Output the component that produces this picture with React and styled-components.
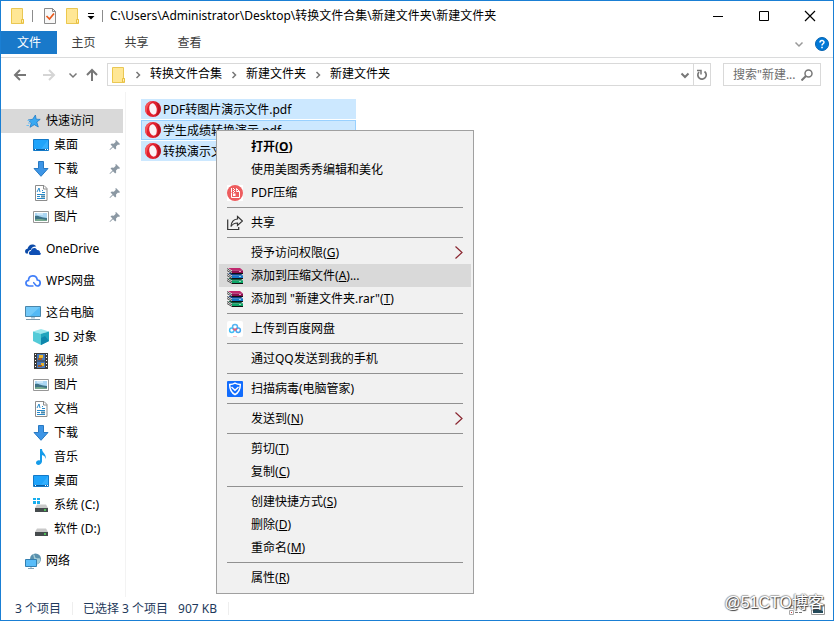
import React from 'react';
import styled, { createGlobalStyle, css } from 'styled-components';

const GlobalStyle = createGlobalStyle`
  *, *::before, *::after {
    box-sizing: border-box;
  }

  body {
    margin: 0;
    background: #fff;
  }

  body, button, input {
    font-family: 'Noto Sans', 'Noto Sans CJK SC', sans-serif;
    font-size: 12px;
    color: #000;
  }

  button {
    border: none;
    padding: 0;
    margin: 0;
    background: transparent;
    text-align: left;
    white-space: nowrap;
  }

  svg {
    display: block;
    flex: none;
  }
`;

const Window = styled.div`
  position: relative;
  display: flex;
  flex-direction: column;
  min-height: 100vh;
  border: 1px solid #1a7fd4;
  background: #fff;
`;

const TitleBar = styled.header`
  display: flex;
  align-items: center;
  height: 30px;
`;

const QuickTools = styled.div`
  display: flex;
  align-items: center;
  padding-left: 8px;
`;

const ToolButton = styled.button`
  display: flex;
  align-items: center;
  justify-content: center;
  width: ${({ $width }) => $width || 16}px;
  height: 22px;
`;

const ToolDivider = styled.span`
  width: 1px;
  height: 12px;
  margin: 0 ${({ $after }) => $after || 7}px 0 7px;
  background: #8c8c8c;
`;

const Title = styled.h1`
  flex: 1;
  min-width: 0;
  margin: 0;
  overflow: hidden;
  font-size: 12px;
  font-weight: 400;
  line-height: 20px;
  white-space: nowrap;
`;

const CaptionButton = styled.button`
  display: flex;
  align-items: center;
  justify-content: center;
  width: 46px;
  height: 30px;
`;

const Ribbon = styled.nav`
  display: flex;
  align-items: flex-start;
  height: 27px;
  border-bottom: 1px solid #dadbdc;
`;

const Tab = styled.button`
  width: ${({ $primary }) => ($primary ? 56 : 53)}px;
  height: 23px;
  padding-top: 1px;
  line-height: 22px;
  text-align: center;
  color: ${({ $primary }) => ($primary ? '#fff' : '#3c3c3c')};
  background: ${({ $primary }) => ($primary ? '#1979ca' : 'transparent')};
`;

const RibbonTools = styled.div`
  display: flex;
  align-items: center;
  gap: 8px;
  height: 26px;
  margin-left: auto;
  padding-right: 4px;
`;

const NavRow = styled.div`
  display: flex;
  align-items: center;
  padding: 5px 12px 6px 0;
`;

const NavButtons = styled.div`
  display: flex;
  align-items: center;
  width: 106px;
  padding-left: 11px;
`;

const AddressBar = styled.div`
  display: flex;
  align-items: center;
  flex: 1;
  min-width: 0;
  height: 23px;
  border: 1px solid #d9d9d9;
`;

const Crumbs = styled.ol`
  display: flex;
  align-items: center;
  flex: 1;
  min-width: 0;
  margin: 0;
  padding: 0 0 0 2px;
  list-style: none;
`;

const Crumb = styled.li`
  display: flex;
  align-items: center;
  height: 21px;
`;

const CrumbButton = styled.button`
  height: 21px;
  line-height: 20px;
  padding-bottom: 1px;
`;

const CrumbArrow = styled.span`
  display: flex;
  justify-content: center;
  width: 24px;
`;

const RefreshButton = styled(ToolButton)`
  width: 17px;
  height: 21px;
  border-left: 1px solid #d9d9d9;
`;

const SearchBox = styled.label`
  display: flex;
  align-items: center;
  width: 98px;
  height: 23px;
  margin-left: 12px;
  padding: 0 7px 0 9px;
  border: 1px solid #d9d9d9;
`;

const SearchInput = styled.input`
  flex: 1;
  min-width: 0;
  height: 20px;
  padding: 0;
  border: none;
  outline: none;
  background: transparent;

  &::placeholder {
    color: #6d6d6d;
    opacity: 1;
  }
`;

const Main = styled.main`
  display: flex;
  flex: 1;
`;

const Sidebar = styled.nav`
  display: flex;
  flex-direction: column;
  gap: 8px;
  width: 125px;
  padding: 17px 2px 0 0;
  border-right: 1px solid #f3f3f3;
`;

const Group = styled.div`
  display: flex;
  flex-direction: column;
`;

const SideItem = styled.button`
  display: flex;
  align-items: center;
  gap: 5px;
  height: 24px;
  padding: 0 2px 0 ${({ $child }) => ($child ? 32 : 24)}px;
  line-height: 22px;
  background: ${({ $active }) => ($active ? '#d9d9d9' : 'transparent')};
`;

const PinSlot = styled.span`
  margin-left: auto;
`;

const Files = styled.section`
  display: flex;
  flex-direction: column;
  align-items: flex-start;
  gap: 1px;
  flex: 1;
  padding: 7px 15px;
`;

const FileRow = styled.button`
  display: flex;
  align-items: center;
  gap: 2px;
  width: 215px;
  height: 20px;
  padding: 0 3px;
  line-height: 18px;
  border: 1px solid ${({ $focused }) => ($focused ? '#99d1ff' : '#cce8ff')};
  background: #cce8ff;
`;

const FileName = styled.span`
  padding-top: 2px;
`;

const StatusBar = styled.footer`
  display: flex;
  align-items: center;
  height: 23px;
  padding-left: 14px;
  line-height: 20px;
  color: #1e395b;
`;

const StatusDivider = styled.span`
  width: 1px;
  height: 13px;
  margin: 0 10px 0 11px;
  background: #eee;
`;

const StatusSize = styled.span`
  margin-left: 10px;
`;

const ViewButtons = styled.div`
  display: flex;
  gap: 8px;
  margin-left: auto;
  padding-right: 8px;
`;

const Watermark = styled.div`
  position: absolute;
  right: 9px;
  bottom: 5px;
  font-family: 'Liberation Sans', 'Noto Sans CJK SC', sans-serif;
  font-size: 16px;
  line-height: 24px;
  color: #fff;
  text-shadow: 1px 1px 1px #333, -1px 0 1px #999, 0 -1px 1px #aaa;
  pointer-events: none;
`;

const Menu = styled.div`
  position: absolute;
  top: 129px;
  left: 215px;
  width: 258px;
  padding: 4px 2px;
  border: 1px solid #a0a0a0;
  background: #f1f1f1;
`;

const MenuItem = styled.button`
  display: flex;
  align-items: center;
  width: 100%;
  height: 23px;
  padding: 0 8px;
  line-height: 22px;

  ${({ $hover }) => $hover && css`
    background: #d9d9d9;
  `}

  ${({ $bold }) => $bold && css`
    font-weight: 700;
  `}
`;

const MenuIcon = styled.span`
  width: 24px;
`;

const MenuArrow = styled.span`
  margin-left: auto;
`;

const MenuDivider = styled.hr`
  height: 1px;
  margin: 3px 8px;
  border: none;
  background: #919191;
`;

const Svg = ({ size = 16, children, ...rest }) => (
  <svg width={size} height={size} viewBox={`0 0 ${size} ${size}`} fill="none" aria-hidden="true" {...rest}>
    {children}
  </svg>
);

const FolderIcon = () => (
  <Svg>
    <path d="M2.5.5h11v11h1v4h-12z" fill="#ffe795" stroke="#e9c754" />
    <path d="M12.5 15v-3.5h2V15z" fill="#fff0b5" stroke="#e9c040" />
    <path d="M2.5 1v14.5" stroke="#edc84b" />
  </Svg>
);

const CheckDocIcon = () => (
  <Svg>
    <path d="M2.5.5h8l3 3v12h-11z" fill="#f8f8f8" stroke="#8a8a8a" />
    <path d="M10.5.5v3h3" stroke="#8a8a8a" />
    <path d="M4.5 8l3 3L12 5.5" stroke="#e8591c" strokeWidth="1.7" />
  </Svg>
);

const Chevron = ({ dir = 'down', color = '#777', width = 2 }) => {
  const paths = { down: 'M1.5 3.5L5 7l3.5-3.5', right: 'M3.5 2L6.5 5l-3 3' };
  return (
    <Svg size={10}>
      <path d={paths[dir]} stroke={color} strokeWidth={width} />
    </Svg>
  );
};

const ArrowIcon = ({ dir, color = '#777' }) => {
  const paths = {
    back: 'M14 8H3M8 3L3 8l5 5',
    forward: 'M2 8h11M8 3l5 5-5 5',
    up: 'M8 14V3M3 8l5-5 5 5',
  };
  return (
    <Svg>
      <path d={paths[dir]} stroke={color} strokeWidth="2" />
    </Svg>
  );
};

const StarIcon = () => (
  <Svg>
    <path d="M10.4 2l.8 4.200 4 .2-3.400 2.600 1.500 5-4-2.300-4.300 2.600 1.200-4.300L3 7l4.600-.7z" fill="#3aa9f2" stroke="#1876c4" strokeWidth=".7" />
    <path d="M2.500 7.500H5M3 10h2.500M1.500 12.500H4" stroke="#6fbdf0" />
  </Svg>
);

const DesktopIcon = () => (
  <Svg>
    <path d="M.5 2.500h15v11H.5z" fill="#1fa4fb" stroke="#1379c7" />
    <path d="M15 3v8L8 12z" fill="#4cbaff" opacity=".5" />
    <path d="M1 12.500h14" stroke="#0b5c9f" />
    <path d="M2 12.500h1M12 12.500h1M14 12.500h1" stroke="#fff" />
  </Svg>
);

const DownloadIcon = () => (
  <Svg>
    <path d="M5.500.5h5v7h4.500L8 15.300 1 7.500h4.500z" fill="#3d95e6" stroke="#2879c2" />
  </Svg>
);

const DocumentIcon = () => (
  <Svg>
    <path d="M2.500.5h8.500l3 3v12H2.500z" fill="#fff" stroke="#8c8c8c" />
    <path d="M10.500.5v3.500H14" stroke="#8c8c8c" />
    <path d="M4 7l2-4 1 4M9 5.500h1M9 7.500h3M4 9.500h8M4 11.500h3M4 13.500h8" stroke="#2889c9" />
    <path d="M8 10.500h4v2H8z" fill="#4b87a8" />
  </Svg>
);

const PictureIcon = () => (
  <Svg>
    <path d="M.5 2.500h15v11H.5z" fill="#fff" stroke="#979797" />
    <path d="M2 4h12v8H2z" fill="#aad6f3" />
    <path d="M2 7c3-1 6 2 12 2v3H2z" fill="#3d7286" />
    <path d="M2 10.500c5-1 8 0 12 .5v1H2z" fill="#77a98f" />
    <path d="M4 5h6" stroke="#eef8ff" />
  </Svg>
);

const PinIcon = () => (
  <Svg size={12}>
    <path d="M7 1l4 4-1 1-1-.5-2 2 .2 2L6.200 10.500 4 8.200 1 11l-.5-.5L3.500 7.500 1.500 5.500 2.800 4.500l2 .2 2-2-.5-1z" fill="#8b98a3" />
  </Svg>
);

const OneDriveIcon = () => (
  <Svg>
    <path d="M1 12.500C-1 10.500.5 7.800 2.500 7.800 3 5 5.500 3 8 3.500c1.600.2 2.500 1 3.200 2-3.200-.3-5 1.600-5.400 3.500-2.200.2-3.100 1.800-2.800 3.500z" fill="#0b4aa8" />
    <path d="M5.500 14C3.300 14 3.200 10 6 10c.2-3.200 4.800-4.300 6-1 2.500-.3 3.200 1.600 2.800 2.600C16.500 12.200 16 14 14.500 14z" fill="#0f50b5" />
  </Svg>
);

const WpsCloudIcon = () => (
  <Svg>
    <path d="M8.500 13H4.200C.2 13-.2 8 3.500 7.500 3.500 1.500 11.500 1.300 12.300 7 16.300 7.200 16 13 12.200 13 10 13 9.800 9.500 8 9.500" stroke="#417ff9" strokeWidth="1.700" />
  </Svg>
);

const ComputerIcon = () => (
  <Svg>
    <path d="M.5 1.500h15v10H.5z" fill="#54b9f5" stroke="#4a86aa" />
    <path d="M1 2h14L5 11H1z" fill="#7fd0fb" opacity=".7" />
    <path d="M6 12h4v1.500H6z" fill="#a8c5d8" />
    <path d="M1 14.500h14" stroke="#7b98ab" />
  </Svg>
);

const CubeIcon = () => (
  <Svg>
    <path d="M0 2.500L8 0l8 2.500-8 2.300z" fill="#9be8ee" />
    <path d="M0 2.500l8 2.300V16l-8-4z" fill="#54cbd8" />
    <path d="M16 2.500L8 4.800V16l8-4z" fill="#20a5bd" />
    <path d="M8 9l4-2 4 5-8 4z" fill="#0e87ac" />
  </Svg>
);

const VideoIcon = () => (
  <Svg>
    <path d="M1 0h14v16H1z" fill="#3c3c3c" />
    <path d="M4 1h8v6.500H4zM4 8.500h8V15H4z" fill="#4778bc" />
    <path d="M6 2h4v3H6zM8 10h3v3H8z" fill="#e8b42c" />
    <path d="M5 5h4v2H5zM5 12h4v2H5z" fill="#9c5b28" />
    <path d="M2.500 1v14M13.500 1v14" stroke="#fff" strokeDasharray="1 2" />
  </Svg>
);

const MusicIcon = () => (
  <Svg>
    <path d="M7 0h2c0 4 5 5 3.500 10-.3-3-2-3.500-3.500-4v6.500C8.500 16.500 3 17 3 13.800c0-2.200 2.500-3 4-2.300z" fill="#159be9" />
  </Svg>
);

const DriveIcon = ({ system }) => (
  <Svg>
    <path d="M4 7.500h9l2 3.500H2z" fill="#c9c9c9" />
    <path d="M2 11h13v4H2z" fill="#454b4d" />
    <path d="M11 13h2" stroke="#52e35d" strokeWidth="1.500" />
    {system && <path d="M0 1h3v2H0zM4 1h3v2H4zM0 4h3v3H0zM4 4h3v3H4z" fill="#17aeee" />}
  </Svg>
);

const NetworkIcon = () => (
  <Svg>
    <circle cx="10.500" cy="6" r="5.500" fill="#5a91ad" />
    <path d="M8 1c3 1 1 3 3 4s4-1 4.500 2c-1 3-3 5-5 4z" fill="#a5cdd6" />
    <path d="M.5 6.500h11v7H.5z" fill="#59bdf9" stroke="#337fb0" />
    <path d="M3 15.500h6M6 14v1" stroke="#85a4b7" />
  </Svg>
);

const OperaIcon = () => (
  <Svg>
    <circle cx="8" cy="8" r="8" fill="#e3202f" />
    <path d="M8 0C3.300 0 0 3.500 0 8c0 2 .8 4 2 5.300C1 8 3 2.500 8 0z" fill="#f4545c" />
    <path d="M10 15.500c3.500-3 4-9 1-14.500 6.500 3 6.500 11.500-1 14.500z" fill="#b81523" />
    <ellipse cx="8" cy="8" rx="3.700" ry="5.700" transform="rotate(-12 8 8)" fill="#fbf3f6" />
  </Svg>
);

const PdfZipIcon = () => (
  <Svg>
    <path d="M0 0h16v16H0z" fill="#fff" />
    <circle cx="8" cy="8" r="8" fill="#ed5c5e" />
    <path d="M9.500 5.500V3.500l3 3h-3zM12.500 6.500v6h-8v-5" stroke="#fff" />
    <path d="M4.500 3v4M6.500 3v1M7.500 4v1M6.500 5v1M7.500 6v1M6.500 7v1" stroke="#fff" />
    <path d="M6 8.500h2.500v2.500H6z" fill="#fff" />
  </Svg>
);

const ShareIcon = () => (
  <Svg>
    <path d="M.7 4.500v10h11V12" stroke="#333" strokeWidth="1.200" />
    <path d="M10.500 1.500l5 4.500-5 4.500V8C7.500 8 5.500 9 4 11.500 4.300 7 6.500 4.300 10.500 4z" stroke="#333" strokeWidth="1.200" />
  </Svg>
);

// one book of the stack: cover on top, spine in front, pages on the left
const RarBook = ({ y, cover, spine, shine }) => (
  <g transform={`translate(0 ${y})`}>
    <path d="M0 0h2l4 3v3L0 2z" fill="#eee" />
    <path d="M0 .5l5 3.500M0 2.500l5 3" stroke="#222" strokeWidth=".8" />
    <path d="M1 0h12l3 2.500H5z" fill={cover} />
    <path d="M5 2.500h11V5H5z" fill={spine} />
    <path d="M12 3h2v1h-2z" fill={shine} />
    <path d="M5 5.500h11" stroke="#111" />
  </g>
);

const RarIcon = () => (
  <Svg>
    <RarBook y={10} cover="#0b5b3c" spine="#0da768" shine="#8de0b8" />
    <RarBook y={5} cover="#123f86" spine="#1478c8" shine="#8fd0f5" />
    <RarBook y={0} cover="#c0286e" spine="#8c1050" shine="#ef9cc4" />
  </Svg>
);

const BaiduIcon = () => (
  <Svg>
    <rect width="16" height="16" rx="2" fill="#fff" />
    <circle cx="8" cy="6" r="2.500" stroke="#55b4f2" strokeWidth="1.500" />
    <circle cx="4.800" cy="9.300" r="2.200" stroke="#42bdf5" strokeWidth="1.500" />
    <circle cx="11.200" cy="9.300" r="2.200" stroke="#4aa9f0" strokeWidth="1.500" />
    <path d="M6 7.500L8 9.200l2-2" stroke="#f15b77" strokeWidth="1.600" />
    <path d="M6 15.500h4" stroke="#fac4cd" />
  </Svg>
);

const ShieldIcon = () => (
  <Svg>
    <rect width="16" height="16" rx="1" fill="#126cfd" />
    <path d="M8 2.200c1.700 1 3.500 1.300 5.300 1.300 0 5-1.300 8-5.300 10.200C4 11.500 2.700 8.500 2.700 3.500 4.500 3.500 6.300 3.200 8 2.200z" stroke="#fff" strokeWidth="1.500" />
    <path d="M4.500 6L8 9.200 11.500 6" stroke="#fff" strokeWidth="1.500" />
  </Svg>
);

const SubmenuIcon = () => (
  <Svg>
    <path d="M8.500 1.500L15 7.500l-6.500 6" stroke="#8a2630" strokeWidth="1.200" />
  </Svg>
);

const sideGroups = [
  {
    label: '快速访问', icon: <StarIcon />, active: true,
    children: [
      { label: '桌面', icon: <DesktopIcon />, pinned: true },
      { label: '下载', icon: <DownloadIcon />, pinned: true },
      { label: '文档', icon: <DocumentIcon />, pinned: true },
      { label: '图片', icon: <PictureIcon />, pinned: true },
    ],
  },
  { label: 'OneDrive', icon: <OneDriveIcon />, children: [] },
  { label: 'WPS网盘', icon: <WpsCloudIcon />, children: [] },
  {
    label: '这台电脑', icon: <ComputerIcon />,
    children: [
      { label: '3D 对象', icon: <CubeIcon /> },
      { label: '视频', icon: <VideoIcon /> },
      { label: '图片', icon: <PictureIcon /> },
      { label: '文档', icon: <DocumentIcon /> },
      { label: '下载', icon: <DownloadIcon /> },
      { label: '音乐', icon: <MusicIcon /> },
      { label: '桌面', icon: <DesktopIcon /> },
      { label: '系统 (C:)', icon: <DriveIcon system /> },
      { label: '软件 (D:)', icon: <DriveIcon /> },
    ],
  },
  { label: '网络', icon: <NetworkIcon />, children: [] },
];

const files = ['PDF转图片演示文件.pdf', '学生成绩转换演示.pdf', '转换演示文件.pdf'];

const crumbs = ['转换文件合集', '新建文件夹', '新建文件夹'];

const menuSections = [
  [
    { label: '打开', hotkey: 'O', bold: true },
    { label: '使用美图秀秀编辑和美化' },
    { label: 'PDF压缩', icon: <PdfZipIcon /> },
  ],
  [{ label: '共享', icon: <ShareIcon /> }],
  [
    { label: '授予访问权限', hotkey: 'G', submenu: true },
    { label: '添加到压缩文件', hotkey: 'A', suffix: '...', icon: <RarIcon />, hover: true },
    { label: '添加到 "新建文件夹.rar"', hotkey: 'T', icon: <RarIcon /> },
  ],
  [{ label: '上传到百度网盘', icon: <BaiduIcon /> }],
  [{ label: '通过QQ发送到我的手机' }],
  [{ label: '扫描病毒(电脑管家)', icon: <ShieldIcon /> }],
  [{ label: '发送到', hotkey: 'N', submenu: true }],
  [
    { label: '剪切', hotkey: 'T' },
    { label: '复制', hotkey: 'C' },
  ],
  [
    { label: '创建快捷方式', hotkey: 'S' },
    { label: '删除', hotkey: 'D' },
    { label: '重命名', hotkey: 'M' },
  ],
  [{ label: '属性', hotkey: 'R' }],
];

const ContextMenu = () => (
  <Menu role="menu">
    {menuSections.map((items, index) => (
      <React.Fragment key={index}>
        {index > 0 && <MenuDivider />}
        {items.map((item) => (
          <MenuItem key={item.label} role="menuitem" $hover={item.hover} $bold={item.bold}>
            <MenuIcon>{item.icon}</MenuIcon>
            <span>
              {item.label}
              {item.hotkey && <>(<u>{item.hotkey}</u>)</>}
              {item.suffix}
            </span>
            {item.submenu && <MenuArrow><SubmenuIcon /></MenuArrow>}
          </MenuItem>
        ))}
      </React.Fragment>
    ))}
  </Menu>
);

const App = () => {
  return (
    <>
      <GlobalStyle />
      <Window>
        <TitleBar>
          <QuickTools>
            <FolderIcon />
            <ToolDivider $after={9} />
            <ToolButton aria-label="属性"><CheckDocIcon /></ToolButton>
            <ToolButton $width={28} aria-label="新建文件夹"><FolderIcon /></ToolButton>
            <ToolButton $width={9} aria-label="自定义快速访问工具栏">
              <Svg size={8}>
                <path d="M1 1.500h6" stroke="#000" />
                <path d="M.5 4h7L4 7.500z" fill="#000" />
              </Svg>
            </ToolButton>
            <ToolDivider />
          </QuickTools>
          <Title>C:\Users\Administrator\Desktop\转换文件合集\新建文件夹\新建文件夹</Title>
          <CaptionButton aria-label="最小化">
            <Svg><path d="M3 8.500h10" stroke="#000" /></Svg>
          </CaptionButton>
          <CaptionButton aria-label="最大化">
            <Svg><path d="M3.500 3.500h9v9h-9z" stroke="#000" /></Svg>
          </CaptionButton>
          <CaptionButton aria-label="关闭">
            <Svg><path d="M3 3l10 10M13 3L3 13" stroke="#000" strokeWidth="1.200" /></Svg>
          </CaptionButton>
        </TitleBar>

        <Ribbon>
          <Tab $primary>文件</Tab>
          <Tab>主页</Tab>
          <Tab>共享</Tab>
          <Tab>查看</Tab>
          <RibbonTools>
            <ToolButton aria-label="展开功能区"><Chevron color="#999" width={1.5} /></ToolButton>
            <ToolButton $width={14} aria-label="帮助">
              <Svg size={14}>
                <circle cx="7" cy="7" r="6.500" fill="#0078d7" stroke="#0563b0" />
                <path d="M5 5.500C5 3 9 3 9 5.300 9 6.800 7 6.800 7 8.500" stroke="#fff" strokeWidth="1.500" />
                <path d="M6.200 9.700h1.600v1.500H6.200z" fill="#fff" />
              </Svg>
            </ToolButton>
          </RibbonTools>
        </Ribbon>

        <NavRow>
          <NavButtons>
            <ToolButton aria-label="后退"><ArrowIcon dir="back" /></ToolButton>
            <ToolButton $width={44} aria-label="前进"><ArrowIcon dir="forward" color="#d5d5d5" /></ToolButton>
            <ToolButton $width={6} aria-label="最近浏览的位置"><Chevron width={1.5} /></ToolButton>
            <ToolButton $width={32} aria-label="上移"><ArrowIcon dir="up" /></ToolButton>
          </NavButtons>
          <AddressBar>
            <Crumbs>
              <li><FolderIcon /></li>
              {crumbs.map((name, index) => (
                <Crumb key={index}>
                  <CrumbArrow><Chevron dir="right" width={1.5} /></CrumbArrow>
                  <CrumbButton>{name}</CrumbButton>
                </Crumb>
              ))}
            </Crumbs>
            <ToolButton aria-label="以前的位置"><Chevron /></ToolButton>
            <RefreshButton aria-label="刷新">
              <Svg size={12}>
                <path d="M8.500 2.500a4.200 4.200 0 1 1-5.500.5" stroke="#777" strokeWidth="1.700" />
                <path d="M1 1.500h4v4" stroke="#777" strokeWidth="1.500" />
              </Svg>
            </RefreshButton>
          </AddressBar>
          <SearchBox>
            <SearchInput type="text" aria-label="搜索" placeholder={'搜索"新建...'} />
            <Svg size={12}>
              <circle cx="7.500" cy="4.500" r="3.500" stroke="#777" strokeWidth="1.500" />
              <path d="M5 7L.5 11.500" stroke="#777" strokeWidth="2" />
            </Svg>
          </SearchBox>
        </NavRow>

        <Main>
          <Sidebar>
            {sideGroups.map((group) => (
              <Group key={group.label}>
                <SideItem $active={group.active}>
                  {group.icon}
                  <span>{group.label}</span>
                </SideItem>
                {group.children.map((item) => (
                  <SideItem key={item.label} $child>
                    {item.icon}
                    <span>{item.label}</span>
                    {item.pinned && <PinSlot><PinIcon /></PinSlot>}
                  </SideItem>
                ))}
              </Group>
            ))}
          </Sidebar>
          <Files>
            {files.map((name, index) => (
              <FileRow key={name} $focused={index === 1}>
                <OperaIcon />
                <FileName>{name}</FileName>
              </FileRow>
            ))}
          </Files>
        </Main>

        <StatusBar>
          <span>3 个项目</span>
          <StatusDivider />
          <span>已选择 3 个项目</span>
          <StatusSize>907 KB</StatusSize>
          <StatusDivider />
          <ViewButtons>
            <ToolButton $width={15} aria-label="详细信息">
              <Svg size={14}>
                <path d="M.5 3.500h4v3h-4zM.5 8.500h4v4h-4z" stroke="#aaa" />
                <path d="M2 10.500h1" stroke="#c33" />
                <path d="M6 5.500h3M10 5.500h3M6 10.500h3M10 10.500h3" stroke="#777" />
              </Svg>
            </ToolButton>
            <ToolButton $width={14} aria-label="大图标">
              <Svg size={14}>
                <path d="M.5 2.500h13v10H.5z" fill="#fff" stroke="#999" />
                <path d="M2 4h10v7H2z" fill="#8abbdc" />
                <path d="M2 8l4-1 6 2v2H2z" fill="#244b5b" />
              </Svg>
            </ToolButton>
          </ViewButtons>
        </StatusBar>

        <ContextMenu />
        <Watermark>@51CTO博客</Watermark>
      </Window>
    </>
  );
};

export default App;
